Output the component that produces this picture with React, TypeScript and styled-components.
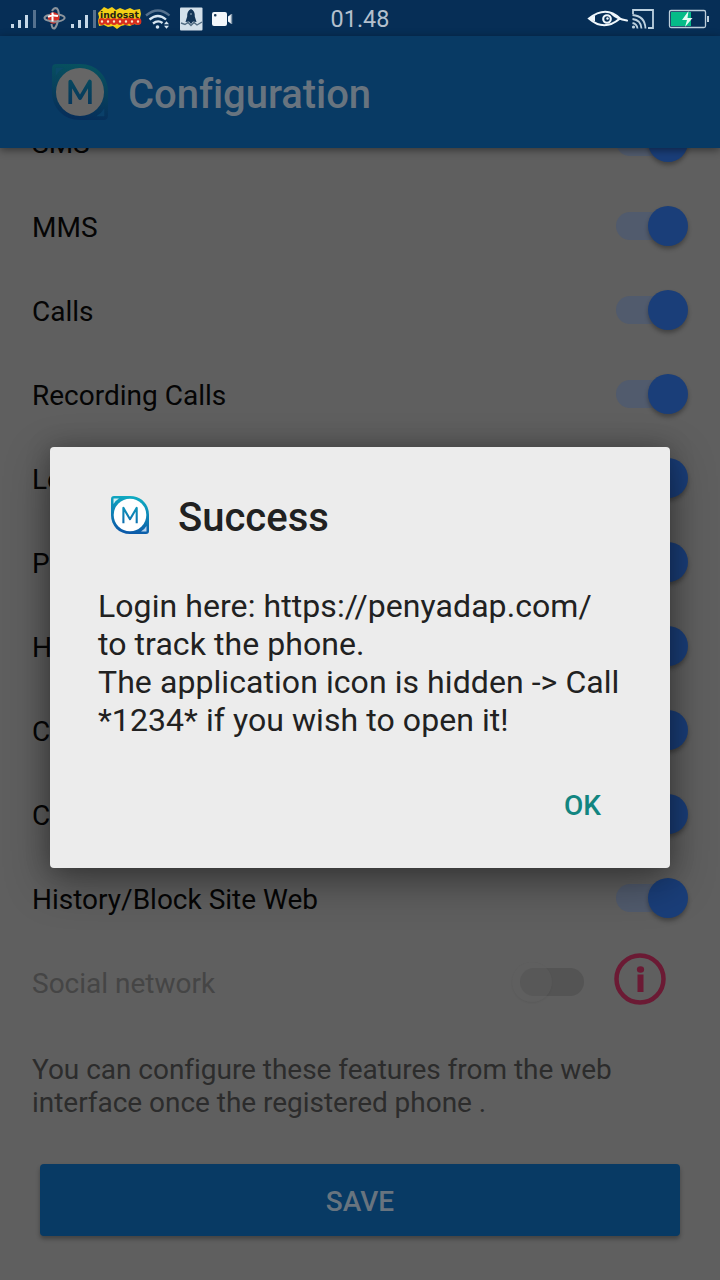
import React from 'react';
import styled, { createGlobalStyle, css } from 'styled-components';

const GlobalStyle = createGlobalStyle`
  * { box-sizing: border-box; }
  body { margin: 0; background: #5f5f5f; font-family: Roboto, "Liberation Sans", sans-serif; }
`;

const Screen = styled.div`
  position: relative;
  width: 720px;
  height: 1280px;
  overflow: hidden;
  display: flex;
  flex-direction: column;
  background: #5f5f5f;
`;

const StatusBar = styled.div`
  position: relative;
  z-index: 2;
  flex: none;
  height: 36px;
  background: #062e56;
  display: grid;
  grid-template-columns: 1fr auto 1fr;
  align-items: center;
`;

const StatusIcons = styled.svg<{ $end?: boolean }>`
  display: block;
  justify-self: ${p => (p.$end ? 'end' : 'start')};
`;

const Clock = styled.span`
  font-size: 23.4px;
  line-height: 36px;
  color: #b4c0cd;
  padding-top: 1px;
`;

const AppBar = styled.header`
  position: relative;
  z-index: 2;
  flex: none;
  height: 112px;
  padding: 0 52px;
  display: flex;
  align-items: center;
  gap: 20px;
  background: #083a64;
  box-shadow: 0 2px 8px rgba(0, 0, 0, 0.45);
`;

const AppTitle = styled.h1`
  margin: 0;
  padding-top: 4px;
  font-size: 40px;
  font-weight: 500;
  letter-spacing: -0.06px;
  color: #68747f;
`;

const List = styled.div`
  flex: none;
  margin-top: -47px;
`;

const Row = styled.div<{ $muted?: boolean }>`
  height: 84px;
  padding: 0 32px;
  display: flex;
  align-items: center;
  justify-content: space-between;
  font-size: 28px;
  color: ${p => (p.$muted ? '#454545' : '#050505')};
`;

const Track = styled.span<{ $off?: boolean }>`
  position: relative;
  width: 72px;
  height: 40px;
  margin-top: -2px;
  display: flex;
  align-items: center;
  justify-content: flex-end;
  &::before {
    content: '';
    position: absolute;
    left: 0;
    top: 6px;
    width: 64px;
    height: 28px;
    border-radius: 14px;
    background: ${p => (p.$off ? '#545454' : '#515b6d')};
  }
  ${p => p.$off && css`
    width: 64px;
    justify-content: flex-start;
  `}
`;

const Knob = styled.span<{ $off?: boolean }>`
  position: relative;
  width: 40px;
  height: 40px;
  border-radius: 50%;
  background: #1a3e79;
  box-shadow: 0 3px 4px rgba(0, 0, 0, 0.3);
  ${p => p.$off && css`
    margin-left: -8px;
    background: rgba(96, 96, 96, 0.4);
    box-shadow: 0 1px 2px rgba(0, 0, 0, 0.06);
  `}
`;

const RowEnd = styled.div`
  display: flex;
  align-items: center;
  gap: 30px;
  margin-right: -10px;
  padding-right: 32px;
`;

const InfoIcon = styled.svg`
  display: block;
  margin-top: -9px;
`;

const Hint = styled.p`
  margin: 28px 32px 0;
  font-size: 28px;
  line-height: 33px;
  letter-spacing: -0.03px;
  color: #2c2c2c;
`;

const SaveButton = styled.button`
  flex: none;
  height: 72px;
  margin: 45px 40px 0;
  padding: 2px 0 0;
  border: 0;
  border-radius: 4px;
  background: #083a64;
  box-shadow: 0 3px 4px rgba(0, 0, 0, 0.3);
  font: 500 28px Roboto, sans-serif;
  color: #68747f;
`;

const Dialog = styled.section`
  position: absolute;
  z-index: 3;
  left: 50px;
  top: 447px;
  width: 620px;
  height: 421px;
  padding: 48px 48px 0;
  border-radius: 4px;
  background: #ececec;
  box-shadow: 0 14px 44px rgba(0, 0, 0, 0.38), 0 0 24px rgba(0, 0, 0, 0.22);
  color: #212121;
`;

const DialogHeader = styled.div`
  display: flex;
  align-items: center;
  gap: 29px;
  height: 42px;
  padding-left: 13px;
`;

const DialogLogo = styled.div`
  padding-bottom: 2px;
`;

const DialogTitle = styled.h2`
  margin: 0;
  padding-top: 3px;
  font-size: 40px;
  font-weight: 500;
`;

const DialogText = styled.p`
  margin: 50px 0 0;
  font-size: 32px;
  line-height: 38px;
  letter-spacing: 0.07px;
  white-space: nowrap;
`;

const DialogActions = styled.div`
  display: flex;
  justify-content: flex-end;
  margin-top: 50px;
  padding-right: 21px;
`;

const DialogButton = styled.button`
  border: 0;
  padding: 0;
  background: none;
  font: 500 28px/33px Roboto, sans-serif;
  color: #128580;
`;

const LogoSvg = styled.svg`
  display: block;
`;

function Logo({ size, id, dim }: { size: number; id: string; dim?: boolean }) {
  const top = dim ? '#07525f' : '#10adc2';
  const bottom = dim ? '#062d5a' : '#0b57a8';
  return (
    <LogoSvg width={size} height={size} viewBox="1 1 38 38">
      <defs>
        <linearGradient id={id} gradientUnits="userSpaceOnUse" x1="24" y1="1" x2="18" y2="39">
          <stop offset="0" stopColor={top} />
          <stop offset="1" stopColor={bottom} />
        </linearGradient>
      </defs>
      <path
        d="M4 1H20C31 1 39 9 39 20V36Q39 39 36 39H20C9 39 1 31 1 20V4Q1 1 4 1Z"
        fill={`url(#${id})`}
      />
      <path d="M3.5 3.5H9Q5.500 5.500 3.500 9Z" fill={dim ? '#0b4a69' : '#d5f0f3'} />
      <path d="M36.500 36.500H31Q34.500 34.500 36.500 31Z" fill={dim ? '#0a4069' : '#b8d2ee'} />
      <circle cx="20" cy="20" r="16.3" fill={dim ? '#666666' : '#ffffff'} />
      <path
        d="M13.4 28.2V12.9L20 24.200L26.700 12.900V28.200"
        fill="none"
        stroke={`url(#${id})`}
        strokeWidth={dim ? 2.5 : 2.1}
        strokeLinejoin="round"
      />
    </LogoSvg>
  );
}

const CarrierText = styled.text`
  font: 900 9px "DejaVu Sans", sans-serif;
`;

function LeftStatus() {
  return (
    <StatusIcons width="240" height="36" viewBox="0 0 240 36">
      <g fill="#c5d8e8">
        <path d="M11 23h3v4h-3zM18 19h3v8h-3zM25 14h3v13h-3z" />
        <path d="M71 23h3v4h-3zM78 19h3v8h-3zM85 14h3v13h-3z" />
      </g>
      <path d="M33 9h3v18h-3zM93 9h3v18h-3z" fill="#55718e" />
      <path d="M52 10Q54 6 57 7.500Q60 11 58 19" fill="none" stroke="#8c949c" strokeWidth="2" />
      <circle cx="53.500" cy="17" r="5.800" fill="#d72e25" />
      <g fill="none" stroke="#8c949c" strokeWidth="2">
        <path d="M58 19Q57 25 54.500 27.500Q52 28 51.500 23" />
        <path d="M59 13.500Q65.500 15 64.500 17.500Q61 22 50 20Q44 19 44.500 16.500Q46 14 50 14" />
      </g>
      <path d="M52.500 11.500V20.500M48 15.800Q52 13.500 58 15" fill="none" stroke="#fff" strokeWidth="2" />
      <path
        d="M101 9l3-3 4 2 4-2 4 3 4-2 5 2 5-2 4 2 6-1 1 5-1 4 1 5-3 2-4-1-4 2-5-1-4 1-4 3-4-3-5 1-4-2-5 1-1-5 1-4-1-4z"
        fill="#f3cf16"
      />
      <CarrierText x="100" y="17" textLength="39" lengthAdjust="spacingAndGlyphs" fill="#252313">indosat</CarrierText>
      <g fill="#f9e6c8" stroke="#d92f20" strokeWidth="2.200">
        {[102, 108, 114, 120, 126, 132, 138].map(x => (
          <circle key={x} cx={x} cy="20.5" r="2.3" />
        ))}
      </g>
      <path d="M129 16.500v3" stroke="#d92f20" strokeWidth="1.500" />
      <g fill="none" strokeWidth="2.300">
        <path d="M146 14.500Q158 4.500 169.500 14.500" stroke="#55718e" />
        <path d="M149.500 18.500Q158 11.500 166 18.500" stroke="#d7e5f0" />
        <path d="M153 22.500Q158 18.500 162.500 22" stroke="#d7e5f0" />
      </g>
      <circle cx="157.500" cy="26" r="1.800" fill="#d7e5f0" />
      <path d="M164 23.300l2.500-3 2.500 3zM164 24.800l2.500 3 2.500-3z" fill="#d7e5f0" />
      <rect x="180" y="6.500" width="22.500" height="23" rx="1" fill="#d3e0ea" />
      <path d="M181 22l4 1.500 3-2 3 3 3-3 3 2.500 5-3" fill="none" stroke="#526c82" strokeWidth="1.400" />
      <path d="M191 8c3 1.500 4 4 3.800 7.500l1.700 5.500-3.500-.5-2 2.500-2-2.500-3.500.5 1.700-5.500c-.2-3.500.8-6 3.800-7.500z" fill="#123456" />
      <circle cx="191" cy="13" r="1" fill="#6f879c" />
      <rect x="212" y="11" width="15" height="14" rx="2" fill="#f3f7fb" />
      <path d="M228 15.500l3.500-2.500v10l-3.500-2.500z" fill="#f3f7fb" />
      <path d="M231.500 13v10" stroke="#8297ab" strokeWidth="1.500" />
      <rect x="214" y="13" width="2.500" height="2.500" rx="1" fill="#173756" />
    </StatusIcons>
  );
}

function RightStatus() {
  return (
    <StatusIcons $end width="140" height="36" viewBox="580 0 140 36">
      <g fill="none" stroke="#eff7fc" strokeWidth="2.100" strokeLinecap="round">
        <path d="M589 17.500Q606 4 620 17.500Q604 31 589 17.500ZM611 12Q617 18 627 19.500" />
        <circle cx="607" cy="18" r="3.800" />
      </g>
      <path d="M588 17.500l7-3v6z" fill="#eff7fc" />
      <circle cx="607.500" cy="17.500" r="1.200" fill="#eff7fc" />
      <g fill="none" stroke="#bdd1df" strokeWidth="1.800">
        <path d="M633 13V9h20v18h-5" />
        <path d="M632.500 14Q645 15 645.500 27.500M632.500 18Q641 19 641.500 27.500M632.500 22Q637 23 637.500 27.500" />
      </g>
      <circle cx="633.500" cy="26" r="1.600" fill="#bdd1df" />
      <rect x="669.500" y="9.500" width="36" height="17" rx="1.500" fill="none" stroke="#bdcedb" strokeWidth="1.300" />
      <path d="M671 11h20v14h-20z" fill="#06bb88" />
      <path d="M688.500 10l-6.500 9h5l-2 7 7.500-9h-5z" fill="#e5fbf4" />
      <path d="M707 15h2v6h-2z" fill="#bdcedb" />
    </StatusIcons>
  );
}

const features = [
  'SMS', 'MMS', 'Calls', 'Recording Calls', 'Lo', 'P', 'H', 'C', 'C', 'History/Block Site Web',
];

export default function App() {
  return (
    <>
      <GlobalStyle />
      <Screen>
        <StatusBar>
          <LeftStatus />
          <Clock>01.48</Clock>
          <RightStatus />
        </StatusBar>
        <AppBar>
          <Logo size={56} id="app-logo" dim />
          <AppTitle>Configuration</AppTitle>
        </AppBar>
        <List>
          {features.map((name, index) => (
            <Row key={index}>
              <span>{name}</span>
              <Track><Knob /></Track>
            </Row>
          ))}
          <Row $muted>
            <span>Social network</span>
            <RowEnd>
              <Track $off><Knob $off /></Track>
              <InfoIcon width="52" height="52" viewBox="0 0 52 52">
                <circle cx="26" cy="26" r="23.500" fill="none" stroke="#6b1a34" strokeWidth="4.500" />
                <ellipse cx="26.500" cy="16.500" rx="3.600" ry="3.200" fill="#6b1a34" />
                <path d="M23.500 21.500h6V39h-6z" fill="#6b1a34" />
              </InfoIcon>
            </RowEnd>
          </Row>
        </List>
        <Hint>You can configure these features from the web interface once the registered phone .</Hint>
        <SaveButton>SAVE</SaveButton>
        <Dialog>
          <DialogHeader>
            <DialogLogo><Logo size={38} id="dialog-logo" /></DialogLogo>
            <DialogTitle>Success</DialogTitle>
          </DialogHeader>
          <DialogText>
            Login here: https://penyadap.com/<br />
            to track the phone.<br />
            The application icon is hidden -&gt; Call<br />
            *1234* if you wish to open it!
          </DialogText>
          <DialogActions><DialogButton>OK</DialogButton></DialogActions>
        </Dialog>
      </Screen>
    </>
  );
}
